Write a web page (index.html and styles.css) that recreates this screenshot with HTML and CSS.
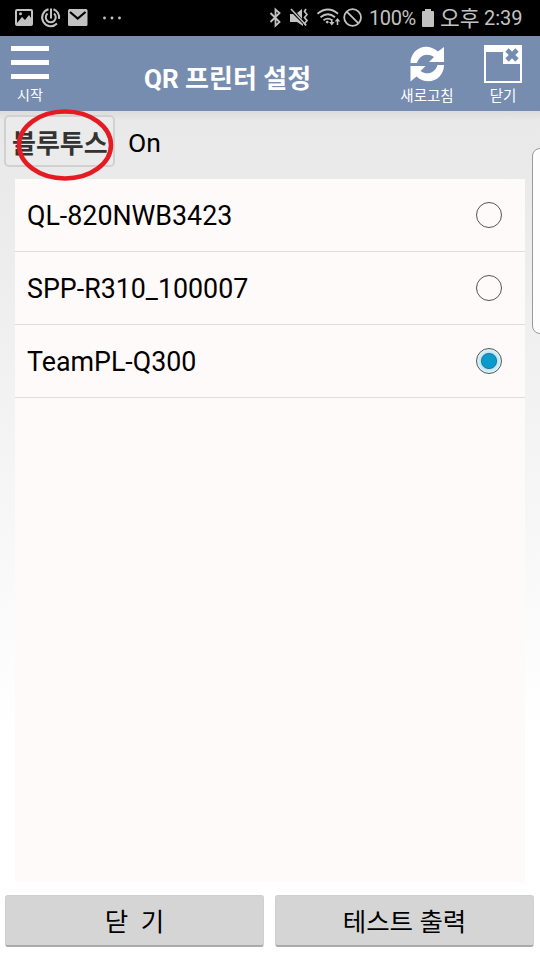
FILE: index.html
```html
<!DOCTYPE html>
<html lang="ko">
<head>
<meta charset="utf-8">
<title>QR 프린터 설정</title>
<link rel="stylesheet" href="styles.css">
</head>
<body>
<div class="screen">
  <div class="status">
    <svg class="s-left" width="130" height="36" viewBox="0 0 130 36">
      <path fill="#c2c2c2" fill-rule="evenodd" d="M17 9h14a2 2 0 0 1 2 2v13a2 2 0 0 1-2 2H17a2 2 0 0 1-2-2V11a2 2 0 0 1 2-2zM17 11v12l5-6 3 3 4-5 2 3v-7z"/>
      <circle cx="20.500" cy="13.800" r="1.500" fill="#c2c2c2"/>
      <g fill="none" stroke="#c2c2c2" stroke-width="2">
        <path d="M48.500 9.300A8.600 8.600 0 1 0 57 23.500M53.500 9.300a8.600 8.600 0 0 1 5.500 9.500"/>
        <path d="M47.500 13.500a5 5 0 1 0 6.500 0M51 8.500v10"/>
      </g>
      <rect x="68" y="9" width="19.500" height="17" rx="1.500" fill="#c2c2c2"/>
      <path d="M70 12l7.700 6.500L85.500 12" fill="none" stroke="#000" stroke-width="2.200"/>
      <g fill="#c2c2c2"><circle cx="104.500" cy="18" r="1.400"/><circle cx="112" cy="18" r="1.400"/><circle cx="119.500" cy="18" r="1.400"/></g>
    </svg>
    <svg class="s-mid" width="98" height="36" viewBox="266 0 98 36">
      <g fill="none" stroke="#c2c2c2" stroke-width="1.800">
        <path d="M270.500 13l9 9-4 3.700V9.500l4 3.500-9 9"/>
        <path d="M317.500 13.700q10.500-8.500 20.500 0M320.500 17.200q7.500-6 14.500 0M323.500 20.200q4.500-3 8.500 0"/>
        <circle cx="352.600" cy="17.500" r="8.400"/><path d="M346.700 11.600l11.800 11.800"/>
        <path d="M306 9l-1.500 2.500 2.500 3-2.500 3 2.500 3-2.500 3 1.500 2" stroke-width="1.700"/>
        <path d="M291 9l15 16" stroke-width="1.500"/>
        <path d="M331.800 19v5M337.500 25v-5" stroke-width="1.500"/>
      </g>
      <path fill="#c2c2c2" d="M290 14h3l10 10v2l-6-4h-7zM297 13l5-4v10zM329 22h5.600l-2.800 3.500zM334.700 21.500h5.600l-2.800-3.500zM325.500 22l1.700-1.500 1.800 1.500-1.800 1.800z"/>
    </svg>
    <span class="pct">100%</span>
    <svg class="battery" width="12" height="36" viewBox="0 0 12 36"><path fill="#c2c2c2" d="M3 9h6v2h2q1 0 1 1v14q0 1-1 1H1q-1 0-1-1V12q0-1 1-1h2z"/></svg>
    <span class="ampm">오후</span><span class="clock">2:39</span>
  </div>

  <header class="header">
    <div class="tool start">
      <svg width="38" height="33" viewBox="0 0 38 33"><path fill="#fff" d="M0 0h38v5H0zM0 14h38v5H0zM0 28h38v5H0z"/></svg>
      <span>시작</span>
    </div>
    <h1>QR 프린터 설정</h1>
    <div class="tool refresh">
      <svg width="36" height="36" viewBox="0 0 36 36"><path fill="#fff" d="M1.500 17C1.500 3 17-5 29 5.500L35 1v15H20l5-5C18 6 10 9.500 8 17zM35 19c0 14-15.500 22-27.500 11.500L1.500 35.500V20h15l-5 5C18.500 30 26.500 26.500 28.500 19z"/></svg>
      <span>새로고침</span>
    </div>
    <div class="tool close">
      <svg width="38" height="38" viewBox="0 0 38 38"><path fill="#fff" fill-rule="evenodd" d="M0 0h38v38H0zM2 7v29h34V19H19V7z"/><path d="M23 5l10 10M33 5L23 15" stroke="#778db0" stroke-width="4.600"/></svg>
      <span>닫기</span>
    </div>
  </header>

  <main class="main">
    <div class="bluetooth">
      <div class="bt-button"><span>블루투스</span>
        <svg class="mark" width="98" height="74" viewBox="0 0 98 74"><ellipse cx="49" cy="37" rx="46" ry="33.500" fill="none" stroke="#e51b23" stroke-width="4.500"/></svg>
      </div>
      <span class="bt-state">On</span>
    </div>
    <div class="list">
      <div class="row"><span>QL-820NWB3423</span><i class="radio"></i></div>
      <div class="row"><span>SPP-R310_100007</span><i class="radio"></i></div>
      <div class="row"><span>TeamPL-Q300</span><i class="radio on"></i></div>
    </div>
    <div class="actions">
      <div class="action">닫&nbsp; 기</div>
      <div class="action">테스트 출력</div>
    </div>
    <div class="edge"></div>
  </main>
</div>
</body>
</html>
```
FILE: styles.css
```css
* { box-sizing: border-box; }
body { margin: 0; }
.screen {
  width: 540px; height: 960px; overflow: hidden;
  display: flex; flex-direction: column;
  font-family: Roboto, "Noto Sans CJK KR", sans-serif;
  color: #000; white-space: nowrap;
}
.status {
  height: 36px; flex: none; display: flex; align-items: center;
  background: #000; color: #c2c2c2; line-height: 38px;
}
.s-mid { margin-left: 136px; }
.pct { width: 53px; margin-left: 5px; font-size: 20px; letter-spacing: -0.4px; }
.ampm { width: 44px; margin-left: 6px; padding-top: 2px; font-size: 21.5px; }
.clock { font-size: 20px; }

.header {
  height: 75px; flex: none; display: flex; background: #778db0; color: #fff;
}
.header h1 {
  margin: 0; width: 340px; padding-left: 84px;
  font-size: 26px; line-height: 86px; font-weight: 700;
}
.tool { display: flex; flex-direction: column; align-items: center; font-size: 14.5px; line-height: 20px; }
.tool svg { flex: none; }
.start { width: 60px; padding-top: 10px; }
.start span { margin-top: 6px; font-size: 14px; }
.refresh { width: 54px; padding-top: 10px; }
.refresh span { margin-top: 5px; }
.close { width: 38px; margin-left: 30px; padding-top: 9px; }
.close span { margin-top: 4px; }

.main {
  position: relative; flex: 1; display: flex; flex-direction: column;
  background: linear-gradient(#dcdcdc 0, #e9e9e9 10px, #eaeaea 70px, #fff 620px);
}
.bluetooth { height: 68px; flex: none; display: flex; padding: 4px 0 0 4px; }
.bt-button {
  position: relative; width: 111px; height: 52px; border: 2px solid #d1d1d1; border-radius: 5px;
  padding-left: 6px; background: #ebebeb;
}
.bt-button span { font-size: 26px; font-weight: 700; line-height: 54px; color: #333; }
.mark { position: absolute; left: 10px; top: -9px; }
.bt-state { margin-left: 13px; font-size: 26.5px; line-height: 55px; }
.list { width: 510px; height: 703px; margin-left: 15px; flex: none; background: #fffafa; }
.row {
  height: 73px; display: flex; align-items: center; justify-content: space-between;
  padding: 0 23px 0 12px; border-bottom: 1px solid #dedcdc; font-size: 26.8px;
}
.row span { padding-top: 2px; }
.radio { width: 26px; height: 26px; border: 1px solid #555; border-radius: 50%; }
.on { background: radial-gradient(circle, #0a9acb 0 6.5px, #24779a 7.5px, #b5e7f7 8.5px, #e3f5fb 12px); }
.actions { display: flex; gap: 11px; padding: 13px 6px 0 5px; }
.action {
  flex: 1; height: 52px; border: 1px solid #d0d0d0; border-bottom: 2px solid #aaa;
  border-radius: 3px; background: #d5d5d5; font-size: 25.5px; line-height: 53px; text-align: center;
}
.edge {
  position: absolute; right: -9px; top: 37px; width: 17px; height: 186px;
  border: 1px solid #999; border-radius: 8px; background: #fdfdfd;
}
```
